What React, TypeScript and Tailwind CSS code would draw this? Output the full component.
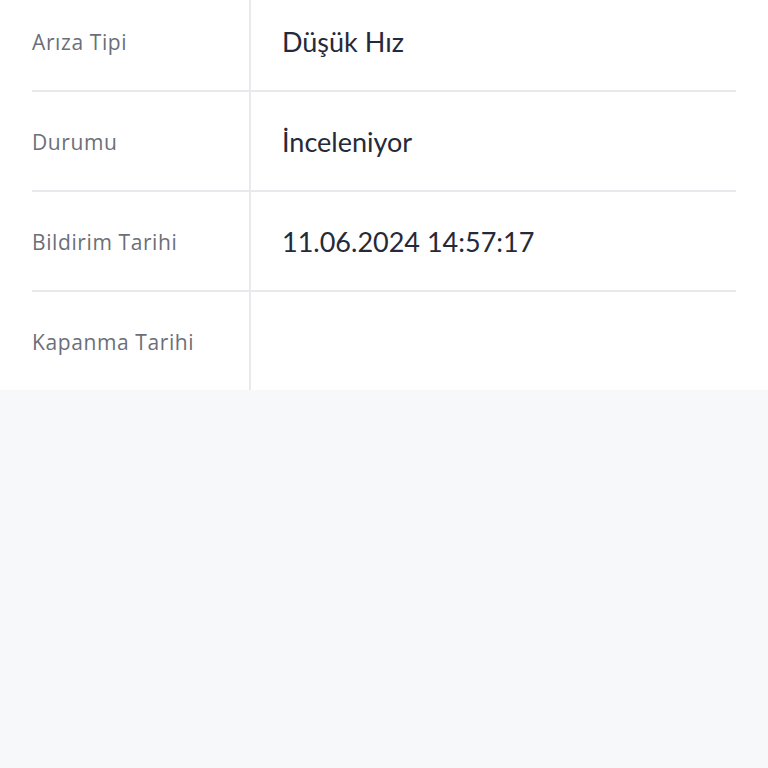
import React from "react";

const rows = [
  { label: "Arıza Tipi", value: "Düşük Hız" },
  { label: "Durumu", value: "İnceleniyor" },
  { label: "Bildirim Tarihi", value: "11.06.2024 14:57:17" },
  { label: "Kapanma Tarihi", value: "" },
];

export default function App() {
  return (
    <div className="min-h-screen w-[768px] bg-[#f7f8fa] overflow-hidden" style={{ fontFamily: "Lato, 'Noto Sans', sans-serif" }}>
      <div className="bg-white pl-8 pr-8 -mt-[8px]">
        {rows.map((r, i) => (
          <div
            key={r.label}
            className={
              i < rows.length - 1
                ? "flex h-[100px] border-b-2 border-[#e8e9ec]"
                : "flex h-[98px]"
            }
          >
            <div className="w-[217px] shrink-0 flex items-center pt-[4px] text-[21px] tracking-[0.6px] text-[#6b6f78] font-['Open_Sans',sans-serif]">
              {r.label}
            </div>
            <div className="flex-1 flex items-center pl-[31px] pt-[2px] border-l-2 border-[#e8e9ec] text-[27px] text-[#252a3a]">
              {r.value}
            </div>
          </div>
        ))}
      </div>
    </div>
  );
}
